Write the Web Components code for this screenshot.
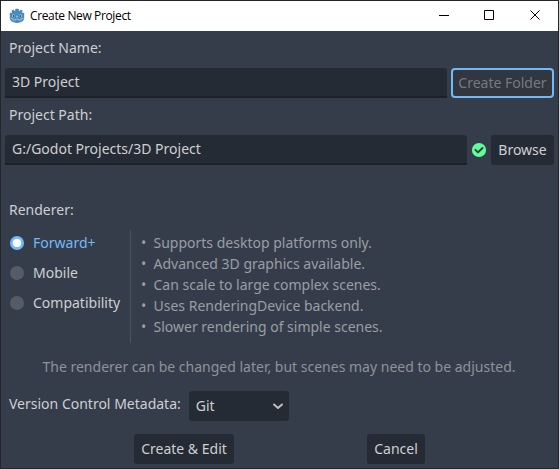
<!DOCTYPE html>
<html lang="en"><head><meta charset="utf-8"><title>Create New Project</title>
<style>
html,body{margin:0;height:100%;overflow:hidden;background:#24262c}
body{font:14px/20px "Noto Sans",sans-serif;color:#cdcfd2}
</style></head><body>
<project-dialog></project-dialog>
<script>
function define(name, css, html) {
  customElements.define(name, class extends HTMLElement {
    constructor() {
      super();
      this.attachShadow({mode: 'open'}).innerHTML = '<style>*{box-sizing:border-box}' + css + '</style>' + html;
    }
  });
}
define('godot-logo', ':host{display:block;width:16px;height:16px}svg{display:block}',
 `<svg width="16" height="16" viewBox="0 0 16 16"><path fill="#478cbf" d="M2.4 2.8 4.4 1.6 5.4 3 6.2 2.8V1L7.4.8H8.7L9.9 1V2.8L10.7 3 11.7 1.6 13.7 2.8 13.1 4.3 13.6 5 15.2 4.5V10.5Q14.8 12.6 13.3 13.6 11 14.9 8 14.9T2.7 13.6Q1.1 12.6 .8 10.5V4.5L2.5 5 3.1 4.3Z"/><path d="M1.5 10.3 3.8 10.5V12L6.3 12.2V11.2H9.7V12.2L12.2 12V10.5L14.5 10.3" fill="none" stroke="#d5e4ef" stroke-width=".55"/><g fill="#d5e2ec"><circle cx="4.6" cy="7.9" r="1.35"/><circle cx="11.4" cy="7.9" r="1.35"/><rect x="7.5" y="7.5" width="1" height="2" rx=".5"/></g><g fill="#414042"><circle cx="4.8" cy="8" r=".9"/><circle cx="11.2" cy="8" r=".9"/></g></svg>`);
define('title-bar', `:host{display:flex;height:30px;background:#fff;color:#000;align-items:center;padding-left:8px;font:12px/16px "Open Sans","Noto Sans",sans-serif}
 span{margin-left:5px;flex:1;letter-spacing:-.37px;white-space:nowrap}svg{display:block}`,
 `<godot-logo></godot-logo><span><slot></slot></span><svg width="138" height="30" fill="none" stroke="#000"><path d="M19 14.5h10M64.5 9.5h9v9h-9zM110.5 9.5l9 9M119.5 9.5l-9 9"/></svg>`);
define('field-label', ':host{display:flex;align-items:center;padding-left:4px;white-space:nowrap;flex:none}', '<slot></slot>');
define('line-edit', ':host{display:block;flex:1;height:30px;background:#252b34;border-bottom:2px solid #1c2127;border-radius:3px 3px 0 0;padding:4px 7px;white-space:nowrap}', '<slot></slot>');
define('push-button', `:host{display:flex;box-sizing:border-box;align-items:center;justify-content:center;height:30px;flex:none;background:#252b34;border-radius:3px;white-space:nowrap}
 :host([focused]){background:#31363f;border:2px solid #70bafa;border-radius:4px;color:#767a81}`, '<slot></slot>');
define('drop-down', ':host{display:flex;box-sizing:border-box;align-items:center;justify-content:space-between;width:100px;height:30px;background:#252b34;border-radius:3px;padding:0 5px 0 7px}svg{display:block}',
 '<slot></slot><svg width="12" height="12" fill="none" stroke="#bcbec1" stroke-width="2" stroke-linecap="round" stroke-linejoin="round"><path d="M2 4.5 6 8l4-3.5"/></svg>');
define('status-ok', ':host{display:flex;align-items:center;width:16px;flex:none}',
 '<svg width="16" height="16"><circle cx="8" cy="8" r="7.1" fill="#5fff97"/><path d="M4.4 7.9 7 10.4 11.5 6" fill="none" stroke="#363d4a" stroke-width="2" stroke-linecap="round" stroke-linejoin="round"/></svg>');
define('radio-option', `:host{display:flex;height:30px;align-items:center;white-space:nowrap;padding-left:4px}
 i{width:16px;height:16px;border:1px solid transparent;background:#565c66 padding-box;border-radius:50%;margin-right:8px;display:block}
 :host([checked]){color:#70bafa}:host([checked]) i{background:radial-gradient(circle,#fff 3.9px,#70bafa 4.6px) padding-box}`, '<i></i><slot></slot>');
define('feature-item', ':host{display:flex;height:21px;line-height:21px;white-space:nowrap}i{width:12.5px;font-style:normal}', '<i>•</i><slot></slot>');
define('project-dialog', `:host{display:block;width:559px;height:469px;padding:1px;box-sizing:border-box}
 main{height:437px;background:#363d4a;padding:7px 4px 0;display:flex;flex-direction:column}
 .row{display:flex;gap:4px;height:30px}field-label{height:20px}
 .ren{display:flex;height:113px;margin-top:10px}
 .opts{width:125px;margin-top:-2px}.list{border-left:1px solid #4d535f;padding:2px 0 0 10px;color:#9a9ea5}
 .note{text-align:center;color:#8e929a;padding-right:1px;margin-top:14px;height:20px;white-space:nowrap}
 .vc{margin-top:14px;gap:8px}.vc field-label{height:26px}.foot{margin-top:13px;padding-left:129px;gap:133px}`,
`<title-bar>Create New Project</title-bar><main>
<field-label>Project Name:</field-label>
<div class="row" style="margin-top:10px"><line-edit>3D Project</line-edit><push-button focused style="width:103px">Create Folder</push-button></div>
<field-label style="margin-top:7px">Project Path:</field-label>
<div class="row" style="margin-top:10px"><line-edit>G:/Godot Projects/3D Project</line-edit><status-ok></status-ok><push-button style="width:63px">Browse</push-button></div>
<field-label style="margin-top:35px">Renderer:</field-label>
<div class="ren"><div class="opts"><radio-option checked>Forward+</radio-option><radio-option>Mobile</radio-option><radio-option>Compatibility</radio-option></div>
<div class="list"><feature-item>Supports desktop platforms only.</feature-item><feature-item>Advanced 3D graphics available.</feature-item><feature-item>Can scale to large complex scenes.</feature-item><feature-item>Uses RenderingDevice backend.</feature-item><feature-item>Slower rendering of simple scenes.</feature-item></div></div>
<div class="note">The renderer can be changed later, but scenes may need to be adjusted.</div>
<div class="row vc"><field-label>Version Control Metadata:</field-label><drop-down>Git</drop-down></div>
<div class="row foot"><push-button style="width:100px">Create &amp; Edit</push-button><push-button style="width:58px">Cancel</push-button></div>
</main>`);
</script></body></html>
